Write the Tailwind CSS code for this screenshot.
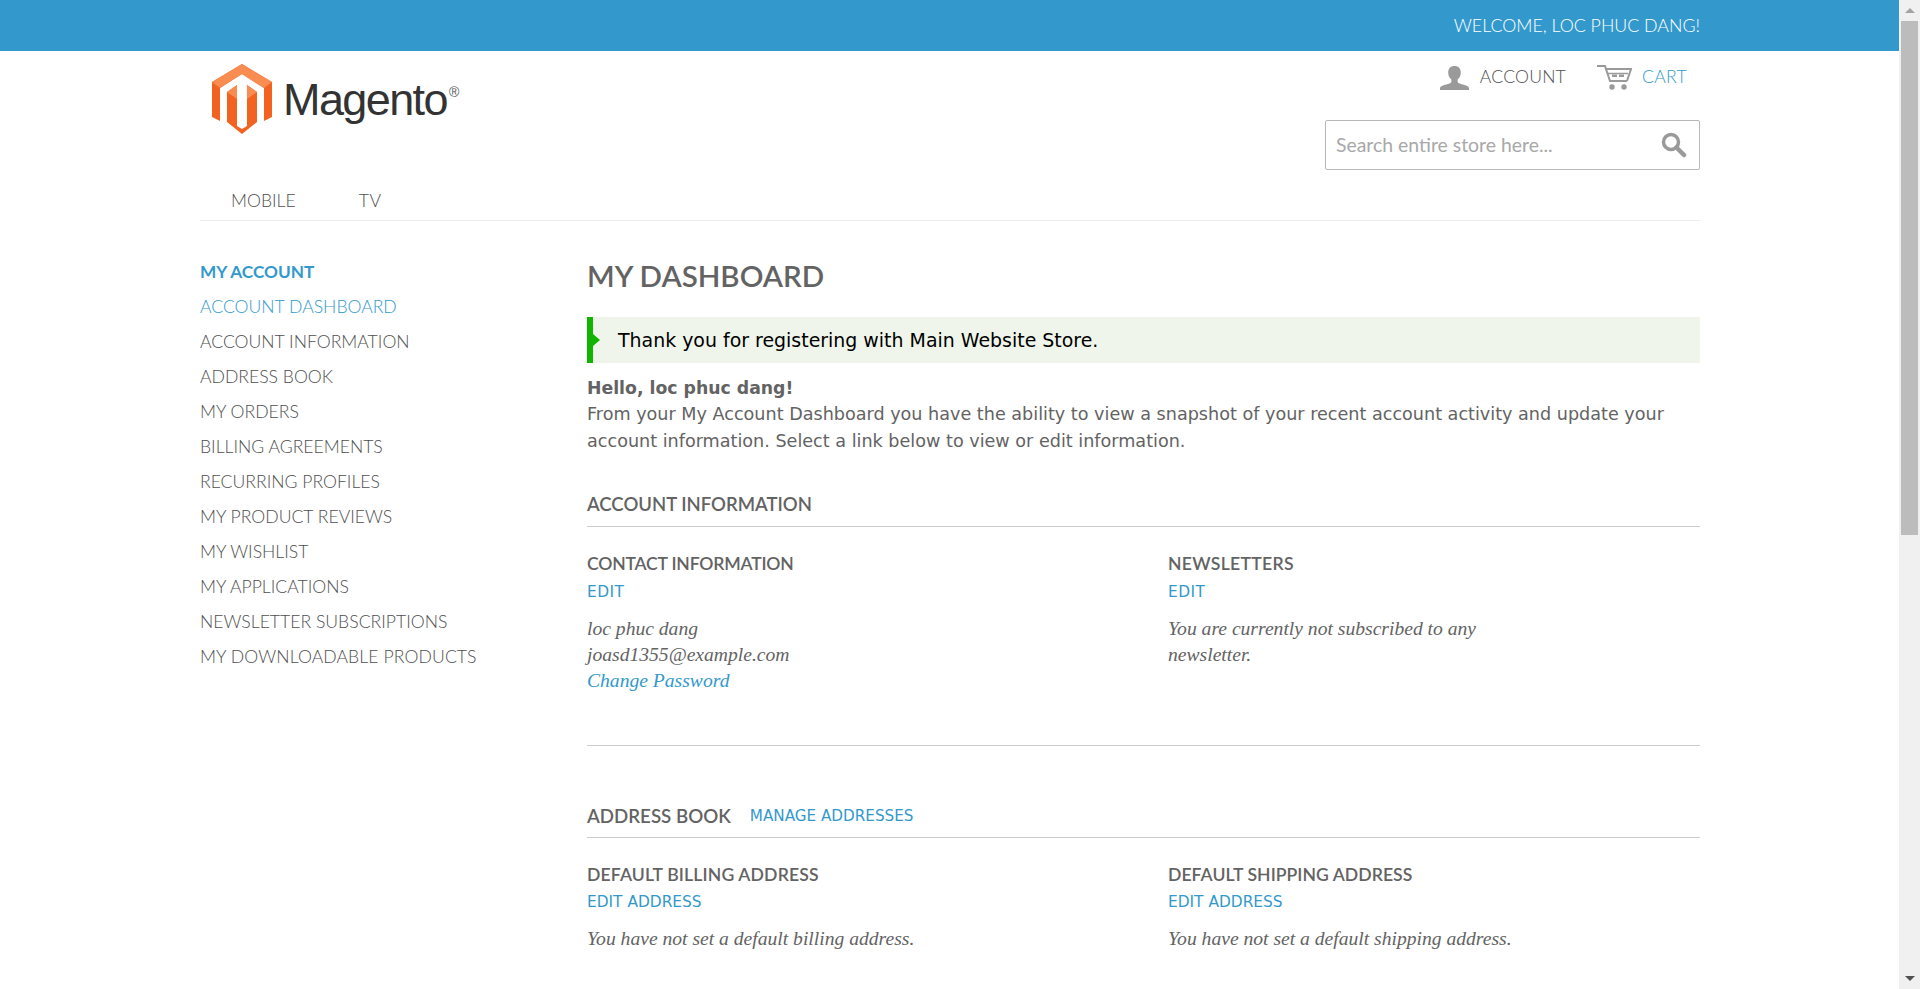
<!DOCTYPE html>
<html lang="en">
<head>
    <meta charset="UTF-8">
    <title>My Account</title>
    <script src="https://cdn.jsdelivr.net/npm/@tailwindcss/browser@4"></script>
</head>
<body class="flex h-screen overflow-hidden bg-white text-[#636363] font-['DejaVu_Sans',sans-serif]">

    <div class="flex-1 min-w-0 h-full overflow-hidden">
        <!-- welcome bar -->
        <div class="h-[51px] bg-[#3399cc]">
            <div class="w-[1500px] ml-[200px] h-full flex items-center justify-end font-['Lato',sans-serif] font-light text-[17.8px] text-white">
                WELCOME, LOC PHUC DANG!
            </div>
        </div>

        <div class="w-[1500px] ml-[200px]">
            <!-- header -->
            <header class="h-[169px] border-b border-[#ededed] flex justify-between box-content">
                <div class="flex flex-col justify-between">
                    <a href="#" class="flex items-start pl-[12px] pt-[13px]">
                        <svg width="60" height="71" viewBox="0 0 60 71">
                            <polygon fill="#f26322" points="30,0 60,18 60,53 52,57 52,24 30,10 8,24 8,57 0,53 0,18"/>
                            <polygon fill="#f98c50" points="30,0 60,18 52,24 30,10 8,24 0,18"/>
                            <polygon fill="#f26322" points="15,28 25,21 25,62 30,65 35,62 35,21 45,28 45,58 30,70 15,58"/>
                            <polygon fill="#f98c50" points="15,28 25,21 25,35"/>
                            <polygon fill="#f98c50" points="45,28 35,21 35,35"/>
                        </svg>
                        <span class="ml-[11px] mt-[12px] text-[45px] leading-[48px] tracking-[-1.6px] text-[#333333] font-['Liberation_Sans',sans-serif]">Magento</span>
                        <span class="ml-[2px] mt-[21px] text-[14px] leading-[14px] text-[#555] font-['Liberation_Sans',sans-serif]">®</span>
                    </a>
                    <nav class="flex pl-[31px] pb-[9px] font-['Lato',sans-serif] font-light text-[#4f4f4f] text-[17.6px] leading-[20px]">
                        <a href="#" class="mr-[63px]">MOBILE</a>
                        <a href="#" class="tracking-[0.5px]">TV</a>
                    </nav>
                </div>
                <div class="flex flex-col items-end">
                    <div class="flex items-center h-[50px] pt-[3px] pr-[13px] font-['Lato',sans-serif] font-light text-[#4f4f4f] text-[17.6px]">
                        <svg width="29" height="24" viewBox="0 0 29 24" class="mr-[11px]">
                            <path fill="#9a9a9a" d="M14.5 0c4 0 6.3 2.7 6.3 6.6 0 3.2-1.4 5.6-3.2 7v1.8c0 1.300 1 1.800 3.500 2.600 4 1.200 7.900 2 7.900 4.300v1.700H0v-1.700c0-2.300 3.900-3.100 7.900-4.300 2.500-.8 3.500-1.300 3.500-2.600v-1.800c-1.800-1.400-3.200-3.800-3.200-7C8.200 2.700 10.500 0 14.500 0z"/>
                        </svg>
                        <a href="#" class="mr-[31px] tracking-[0.2px]">ACCOUNT</a>
                        <svg width="35" height="25" viewBox="0 0 35 25" class="mr-[10px]">
                            <path fill="none" stroke="#9a9a9a" stroke-width="2" d="M0 1h8l5 15h17"/>
                            <path fill="none" stroke="#9a9a9a" stroke-width="2" d="M8 4h26l-4 12"/>
                            <path fill="none" stroke="#9a9a9a" stroke-width="1.500" d="M10 8.500h21"/>
                            <rect x="15" y="9.500" width="5" height="2.500" fill="#9a9a9a"/>
                            <rect x="22" y="9.500" width="5" height="2.500" fill="#9a9a9a"/>
                            <circle cx="15" cy="22" r="2.700" fill="#9a9a9a"/>
                            <circle cx="27" cy="22" r="2.700" fill="#9a9a9a"/>
                        </svg>
                        <a href="#" class="text-[#3399cc] tracking-[0.3px]">CART</a>
                    </div>
                    <div class="mt-[19px] w-[375px] h-[50px] border border-[#b8b8b8] rounded-[2px] flex items-center justify-between pl-[10px] pr-[12px] font-['Lato',sans-serif] text-[19.4px] text-[#a8a8a8]">
                        <span>Search entire store here...</span>
                        <svg width="26" height="26" viewBox="0 0 26 26">
                            <circle cx="10" cy="10" r="7.500" fill="none" stroke="#9a9a9a" stroke-width="3.500"/>
                            <path d="M15.500 15.500L23 23" stroke="#9a9a9a" stroke-width="4.500" stroke-linecap="round"/>
                        </svg>
                    </div>
                </div>
            </header>

            <div class="flex pt-[33px]">
                <!-- sidebar -->
                <aside class="w-[387px] shrink-0 font-['Lato',sans-serif] font-light text-[#4f4f4f] text-[17.6px] leading-[35px]">
                    <h2 class="font-bold text-[#3399cc] text-[17.2px]">MY ACCOUNT</h2>
                    <ul>
                        <li class="text-[#3399cc]">ACCOUNT DASHBOARD</li>
                        <li>ACCOUNT INFORMATION</li>
                        <li>ADDRESS BOOK</li>
                        <li>MY ORDERS</li>
                        <li>BILLING AGREEMENTS</li>
                        <li>RECURRING PROFILES</li>
                        <li>MY PRODUCT REVIEWS</li>
                        <li>MY WISHLIST</li>
                        <li>MY APPLICATIONS</li>
                        <li>NEWSLETTER SUBSCRIPTIONS</li>
                        <li class="tracking-[0.1px]">MY DOWNLOADABLE PRODUCTS</li>
                    </ul>
                </aside>

                <!-- dashboard -->
                <main class="flex-1 min-w-0">
                    <h1 class="font-['Lato',sans-serif] font-semibold text-[29.5px] leading-[44px]">MY DASHBOARD</h1>
                    <div class="relative mt-[19px] h-[46px] bg-[#eff5ea] border-l-[6px] border-[#11b400] flex items-center pl-[25px] pt-[1px] text-[18.95px] text-black">
                        <span class="absolute left-0 top-[17px] border-y-[6px] border-l-[7px] border-y-transparent border-l-[#11b400]"></span>
                        Thank you for registering with Main Website Store.
                    </div>
                    <div class="mt-[12px] text-[17.6px] leading-[26.4px]">
                        <p class="font-bold text-[17.3px]">Hello, loc phuc dang!</p>
                        <p>From your My Account Dashboard you have the ability to view a snapshot of your recent account activity and update your account information. Select a link below to view or edit information.</p>
                    </div>

                    <section class="mt-[30px] border-b border-[#cccccc] h-[43px] flex items-center font-['Lato',sans-serif] font-semibold text-[18.5px]">
                        <h2>ACCOUNT INFORMATION</h2>
                    </section>
                    <div class="grid grid-cols-[581px_1fr] h-[191px] border-b border-[#cccccc] pt-[27px] box-content">
                        <div>
                            <h3 class="font-['Lato',sans-serif] font-semibold text-[17.6px] tracking-[-0.2px] leading-[20px]">CONTACT INFORMATION</h3>
                            <a href="#" class="block mt-[8px] text-[15.4px] tracking-[0.5px] leading-[20px] text-[#3399cc]">EDIT</a>
                            <p class="mt-[14px] font-['Liberation_Serif',serif] italic text-[19.6px] leading-[26px]">
                                loc phuc dang<br>joasd1355@example.com<br><a href="#" class="text-[#3399cc]">Change Password</a>
                            </p>
                        </div>
                        <div>
                            <h3 class="font-['Lato',sans-serif] font-semibold text-[17.6px] tracking-[0.3px] leading-[20px]">NEWSLETTERS</h3>
                            <a href="#" class="block mt-[8px] text-[15.4px] tracking-[0.5px] leading-[20px] text-[#3399cc]">EDIT</a>
                            <p class="mt-[14px] w-[340px] font-['Liberation_Serif',serif] italic text-[19.6px] leading-[26px]">You are currently not subscribed to any newsletter.</p>
                        </div>
                    </div>

                    <section class="mt-[49px] border-b border-[#cccccc] h-[43px] flex items-center">
                        <h2 class="font-['Lato',sans-serif] font-semibold text-[18.7px]">ADDRESS BOOK</h2>
                        <a href="#" class="ml-[19px] mt-[1px] text-[15.2px] text-[#3399cc]">MANAGE ADDRESSES</a>
                    </section>
                    <div class="grid grid-cols-[581px_1fr] pt-[27px]">
                        <div>
                            <h3 class="font-['Lato',sans-serif] font-semibold text-[17.6px] tracking-[0.15px] leading-[20px]">DEFAULT BILLING ADDRESS</h3>
                            <a href="#" class="block mt-[7px] text-[15.4px] leading-[20px] text-[#3399cc]">EDIT ADDRESS</a>
                            <p class="mt-[14px] font-['Liberation_Serif',serif] italic text-[19.6px] leading-[26px]">You have not set a default billing address.</p>
                        </div>
                        <div>
                            <h3 class="font-['Lato',sans-serif] font-semibold text-[17.6px] tracking-[0.05px] leading-[20px]">DEFAULT SHIPPING ADDRESS</h3>
                            <a href="#" class="block mt-[7px] text-[15.4px] leading-[20px] text-[#3399cc]">EDIT ADDRESS</a>
                            <p class="mt-[14px] font-['Liberation_Serif',serif] italic text-[19.6px] leading-[26px]">You have not set a default shipping address.</p>
                        </div>
                    </div>
                </main>
            </div>
        </div>
    </div>

    <!-- scrollbar -->
    <div class="w-[21px] shrink-0 h-full bg-[#f0f0f0] flex flex-col items-center pl-[2px] pr-[2px]">
        <div class="h-[21px] w-full flex items-center justify-center">
            <span class="border-x-[5px] border-b-[5px] border-x-transparent border-b-[#a3a3a3]"></span>
        </div>
        <div class="w-[17px] h-[514px] bg-[#bcbcbc]"></div>
        <div class="flex-1"></div>
        <div class="h-[21px] w-full flex items-center justify-center">
            <span class="border-x-[5px] border-t-[5px] border-x-transparent border-t-[#505050]"></span>
        </div>
    </div>
</body>
</html>
